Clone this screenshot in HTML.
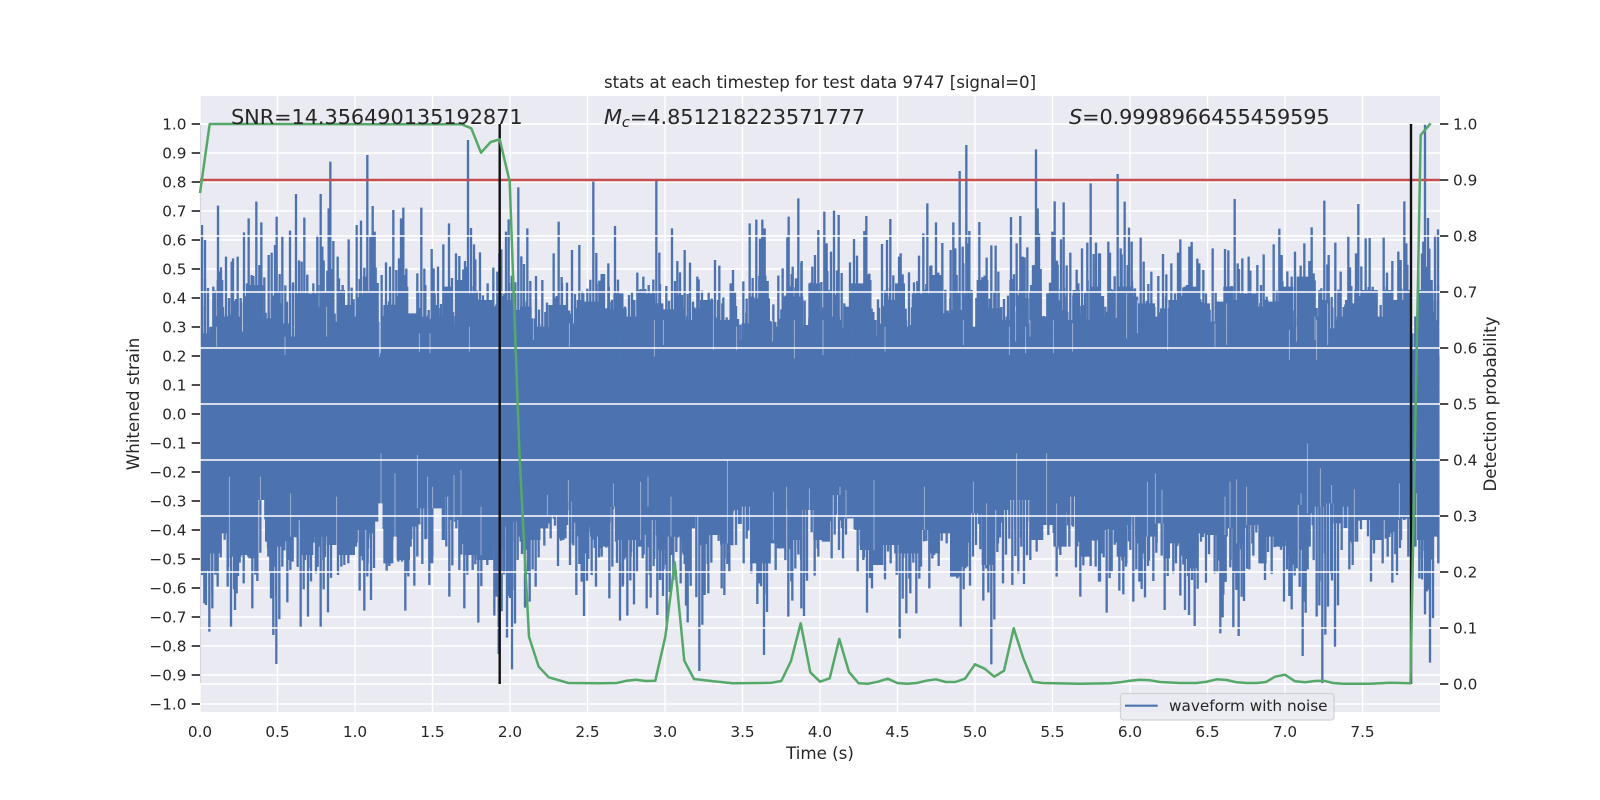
<!DOCTYPE html>
<html><head><meta charset="utf-8"><title>stats</title>
<style>html,body{margin:0;padding:0;background:#fff;width:1600px;height:800px;overflow:hidden}svg{display:block}text{font-family:"DejaVu Sans",sans-serif;fill:#262626}</style></head>
<body>
<svg xmlns="http://www.w3.org/2000/svg" width="1600" height="800" viewBox="0 0 1600 800">
<defs><clipPath id="ax"><rect x="201" y="96" width="1238.5" height="616"/></clipPath></defs>
<rect width="1600" height="800" fill="#fff"/>
<rect x="200" y="96" width="1240" height="616" fill="#EAEAF2"/>
<!-- left axis + x grid -->
<g stroke="#fff" stroke-width="1.39" fill="none">
<path d="M200 124H1440M200 153H1440M200 182H1440M200 211H1440M200 240H1440M200 269H1440M200 298H1440M200 327H1440M200 356H1440M200 385H1440M200 414H1440M200 443H1440M200 472H1440M200 501H1440M200 530H1440M200 559H1440M200 588H1440M200 617H1440M200 646H1440M200 675H1440M200 704H1440"/>
<path d="M200 96V712M277.5 96V712M355 96V712M432.5 96V712M510 96V712M587.5 96V712M665 96V712M742.5 96V712M820 96V712M897.5 96V712M975 96V712M1052.5 96V712M1130 96V712M1207.5 96V712M1285 96V712M1362.5 96V712"/>
</g>
<path d="M200.5 124V684" stroke="#d6d6de" stroke-width="1.2"/>
<!-- waveform -->
<g clip-path="url(#ax)">
<rect x="201" y="355" width="1238.5" height="90" fill="#4C72B0"/>
<g transform="translate(100,60) scale(.33333)">
<path fill="#4C72B0" d="M303 900V820H330V800H350V660H370V770H420V815H430V720H445V675H490V775H520V730H550V790H570V830H590V700H650V740H700V785H712V690H735V735H760V770H780V700H830V880H850V735H900V680H925V760H950V820H965V770H985V820H1000V770H1030V680H1055V795H1065V660H1100V700H1130V720H1180V740H1220V720H1240V750H1260V740H1295V775H1310V800H1345V735H1400V790H1430V720H1450V725H1500V900Z"/>
<path id="sa" fill="none" stroke="#4C72B0" stroke-width="7" d="M306 495V900M315 540V900M340 680V900M354 437V900M360 635V900M378 590V900M395 605V900M399 595V900M413 590V900M432 517V900M446 475V900M460 648V900M469 425V900M484 487V900M506 585V900M515 578V900M530 470V900M525 555V900M547 527V900M570 512V900M588 402V900M605 605V900M613 473V900M622 645V900M640 670V900M652 525V900M662 402V900M667 560V900M686 445V900M691 305V900M713 590V900M717 655V900M728 675V900M746 538V900M770 495V900M783 482V900M795 650V900M802 285V900M812 630V900M818 438V900M824 515V900M845 645V900M858 607V900M870 620V900M880 450V900M897 595V900M903 475V900M910 443V900M918 680V900M952 640V900M964 443V900M976 675V900M995 567V900M1001 625V900M1014 620V900M1030 553V900M1047 490V900M1052 680V900M1068 580V900M1078 588V900M1090 628V900M1098 620V900M1104 240V900M1114 678V900M1122 553V900M1126 598V900M1140 577V900M1163 670V900M1180 623V900M1192 635V900M1198 580V900M1204 568V900M1218 515V900M1226 478V900M1240 650V900M1255 382V900M1272 612V900M1282 505V900M1308 648V900M1327 660V900M1341 728V900M1361 580V900M1376 485V900M1386 670V900M1401 668V900M1416 570V900M1438 555V900M1450 700V900M1462 686V900M1480 365V900M1490 670V900M1498 662V900"/>
<use href="#sa" transform="translate(9,360) scale(1,.6)"/>
<use href="#sa" transform="translate(-9,495) scale(1,.45)"/>
<path fill="none" stroke="#EAEAF2" stroke-width="2.5" stroke-opacity=".6" d="M350 860V800M838 890V700M680 830V740M958 875V820M990 880V820M1108 875V800M1198 880V780M1300 840V775M1408 860V790M555 885V830"/>
</g>
<g transform="translate(600,120) scale(.33333)">
<path fill="#4C72B0" d="M0 720V630H25V500H30V570H40V520H65V565H80V590H110V510H130V520H165V550H190V568H225V525H250V600H280V565H300V540H340V600H410V660H425V610H445V530H460V535H510V605H525V650H545V530H610V615H625V490H660V575H690V590H720V625H730V560H750V490H810V600H830V650H855V540H885V490H915V620H935V520H990V465H1030V580H1060V570H1090V520H1115V620H1130V480H1165V565H1205V600H1228V480H1245V660H1255V610H1290V495H1325V590H1340V520H1360V570H1400V600H1420V510H1440V600H1470V500H1500V720Z"/>
<path id="sb" fill="none" stroke="#4C72B0" stroke-width="7" d="M5 462V720M12 462V720M25 430V720M32 568V720M45 318V720M67 520V720M75 560V720M87 525V720M96 515V720M103 540V720M112 458V720M122 507V720M130 470V720M136 507V720M146 495V720M157 520V720M169 183V720M180 492V720M186 560V720M199 498V720M216 325V720M225 568V720M232 423V720M240 457V720M254 390V720M270 428V720M283 562V720M292 470V720M296 478V720M306 512V720M316 540V720M326 515V720M335 535V720M345 420V720M358 437V720M370 532V720M380 592V720M392 490V720M399 450V720M405 515V720M430 484V720M449 310V720M458 530V720M469 299V720M480 356V720M487 299V720M494 325V720M502 533V720M510 603V720M520 553V720M535 467V720M548 445V720M562 352V720M566 290V720M578 440V720M588 475V720M595 235V720M605 423V720M632 488V720M637 440V720M645 405V720M655 330V720M663 575V720M673 275V720M680 370V720M693 395V720M702 272V720M716 285V720M723 600V720M733 550V720M742 562V720M750 427V720M762 357V720M771 407V720M780 530V720M793 333V720M799 288V720M806 463V720M811 480V720M824 600V720M834 538V720M846 372V720M861 360V720M871 297V720M880 535V720M889 495V720M897 410V720M902 400V720M908 463V720M927 457V720M942 487V720M952 483V720M957 407V720M970 340V720M982 250V720M994 436V720M1008 307V720M1015 458V720M1027 369V720M1040 577V720M1052 390V720M1060 307V720M1066 385V720M1079 153V720M1092 525V720M1099 75V720M1106 370V720M1114 585V720M1138 306V720M1148 480V720M1154 467V720M1160 413V720M1174 376V720M1187 377V720M1195 455V720M1212 537V720M1220 590V720M1233 291V720M1240 477V720M1250 370V720M1261 288V720M1268 410V720M1274 412V720M1282 382V720M1296 495V720M1303 435V720M1308 88V720M1313 265V720M1322 525V720M1331 588V720M1342 520V720M1350 488V720M1357 335V720M1364 244V720M1371 422V720M1383 358V720M1391 247V720M1399 530V720M1411 398V720M1421 510V720M1430 449V720M1435 490V720M1446 385V720M1453 555V720M1462 368V720M1472 190V720M1488 368V720M1497 400V720"/>
<use href="#sb" transform="translate(9,288) scale(1,.6)"/>
<use href="#sb" transform="translate(-9,396) scale(1,.45)"/>
<path fill="none" stroke="#EAEAF2" stroke-width="2.5" stroke-opacity=".6" d="M163 710V600M190 675V600M340 690V600M410 690V620M518 665V600M583 715V600M669 705V600M855 695V620M1090 675V600M1228 705V620M1247 665V560M1277 700V620M1360 700V600M1418 695V610M1290 650V600"/>
</g>
<g transform="translate(1100,60) scale(.33333)">
<path fill="#4C72B0" d="M0 900V770H25V690H40V780H50V680H100V710H115V730H165V770H180V745H205V720H250V680H290V775H305V730H330V785H345V725H370V680H400V720H415V700H470V740H490V720H505V725H545V680H580V800H590V650H640V770H655V720H690V805H710V770H735V720H755V730H785V690H830V770H850V690H880V720H900V755H930V820H950V690H965V620H985V690H1000V780H1017V900Z"/>
<path id="sc" fill="none" stroke="#4C72B0" stroke-width="7" d="M0 580V900M25 545V900M30 578V900M40 690V900M53 342V900M65 583V900M74 425V900M87 503V900M95 545V900M105 685V900M115 820V900M122 533V900M131 605V900M145 672V900M154 635V900M175 648V900M189 582V900M199 643V900M214 610V900M225 700V900M234 578V900M241 538V900M261 675V900M268 560V900M275 546V900M292 596V900M298 610V900M310 630V900M318 700V900M338 565V900M352 725V900M375 567V900M385 571V900M395 678V900M404 417V900M417 627V900M427 595V900M446 590V900M451 632V900M472 615V900M483 675V900M491 583V900M505 725V900M521 553V900M538 506V900M545 585V900M562 634V900M575 650V900M585 575V900M602 617V900M613 550V900M628 603V900M635 502V900M641 640V900M658 690V900M673 422V900M686 585V900M706 548V900M722 635V900M745 530V900M750 622V900M768 580V900M775 432V900M797 535V900M809 534V900M830 690V900M851 533V900M861 638V900M877 603V900M895 575V900M902 600V900M913 424V900M919 550V900M955 610V900M970 545V900M975 190V900M988 566V900M995 660V900M1005 525V900M1014 508V900"/>
<use href="#sc" transform="translate(9,360) scale(1,.6)"/>
<use href="#sc" transform="translate(-9,495) scale(1,.45)"/>
<path fill="none" stroke="#EAEAF2" stroke-width="2.5" stroke-opacity=".6" d="M80 835V700M112 820V720M203 870V730M345 860V790M380 855V730M590 845V800M645 840V770M683 855V730M568 900V810M650 900V780M940 870V820"/>
</g>
<g transform="translate(100,440) scale(.33333)">
<path fill="#4C72B0" d="M303 0V360H330V340H365V280H380V350H425V345H445V355H475V180H495V305H505V320H545V290H585V240H600V345H640V290H680V315H715V345H765V270H800V280H820V245H835V190H850V370H880V290H890V360H930V260H950V205H985V370H1000V205H1025V300H1035V170H1045V240H1075V225H1090V345H1130V360H1180V255H1200V245H1250V290H1265V235H1280V300H1315V265H1345V225H1375V295H1400V185H1420V240H1440V260H1470V290H1500V0Z"/>
<path id="sd" fill="none" stroke="#4C72B0" stroke-width="7" d="M306 405V0M313 490V0M318 495V0M328 575V0M337 505V0M345 335V0M353 440V0M383 440V0M393 560V0M405 510V0M410 460V0M431 430V0M445 350V0M457 505V0M472 423V0M505 350V0M513 475V0M520 585V0M529 672V0M538 325V0M547 380V0M562 487V0M568 360V0M578 365V0M602 560V0M612 345V0M624 530V0M632 385V0M648 400V0M662 560V0M670 360V0M684 517V0M694 315V0M714 405V0M724 380V0M733 375V0M745 370V0M752 320V0M768 320V0M779 452V0M793 512V0M803 370V0M813 480V0M860 392V0M868 378V0M886 285V0M895 365V0M906 365V0M916 512V0M923 400V0M943 437V0M967 372V0M988 435V0M1048 470V0M1065 245V0M1078 390V0M1093 505V0M1102 390V0M1118 390V0M1135 548V0M1145 360V0M1162 375V0M1175 350V0M1183 527V0M1190 470V0M1196 642V0M1205 325V0M1213 395V0M1221 593V0M1227 380V0M1236 688V0M1244 450V0M1253 290V0M1262 305V0M1275 503V0M1289 485V0M1307 440V0M1318 300V0M1333 317V0M1345 250V0M1352 295V0M1374 378V0M1390 300V0M1410 375V0M1418 310V0M1429 465V0M1445 425V0M1452 528V0M1465 357V0M1475 405V0M1488 440V0M1498 325V0"/>
<use href="#sd" transform="translate(9,0) scale(1,.8)"/>
<use href="#sd" transform="translate(-9,0) scale(1,.68)"/>
<path fill="none" stroke="#EAEAF2" stroke-width="2.5" stroke-opacity=".6" d="M388 110V350M481 110V180M572 160V290M710 170V315M843 40V190M885 100V290M952 45V205M1083 90V225M1062 105V240M983 110V205M998 140V205M1143 200V345M1405 120V185M1342 165V225"/>
</g>
<g transform="translate(600,440) scale(.33333)">
<path fill="#4C72B0" d="M0 0V320H30V200H50V300H110V320H130V200H150V240H175V330H195V290H240V300H265V265H285V230H310V285H360V310H385V315H400V210H425V200H450V370H510V310H530V325H555V205H575V300H600V210H640V300H665V305H690V165H720V235H765V270H785V330H810V375H850V315H895V340H960V270H985V340H1020V280H1050V410H1080V380H1105V220H1145V375H1185V210H1230V180H1290V300H1330V255H1360V320H1400V170H1425V240H1440V350H1470V300H1500V0Z"/>
<path id="se" fill="none" stroke="#4C72B0" stroke-width="7" d="M5 350V0M20 310V0M28 475V0M48 305V0M60 542V0M68 440V0M82 527V0M92 350V0M102 493V0M116 320V0M128 355V0M140 505V0M152 473V0M172 525V0M180 420V0M189 468V0M200 570V0M213 345V0M220 420V0M242 430V0M250 300V0M258 497V0M263 547V0M298 693V0M314 465V0M325 460V0M340 255V0M365 445V0M373 465V0M388 395V0M408 315V0M431 370V0M454 400V0M472 492V0M477 430V0M492 645V0M500 463V0M527 390V0M538 325V0M565 530V0M577 482V0M590 295V0M604 505V0M612 528V0M644 407V0M655 350V0M680 305V0M695 355V0M717 330V0M729 355V0M773 395V0M783 330V0M790 360V0M801 518V0M816 445V0M834 375V0M855 418V0M872 370V0M886 340V0M899 595V0M919 520V0M931 460V0M949 520V0M963 380V0M988 445V0M1002 345V0M1016 378V0M1040 310V0M1057 385V0M1072 415V0M1082 560V0M1096 385V0M1110 437V0M1128 315V0M1150 482V0M1162 375V0M1174 673V0M1183 420V0M1194 310V0M1209 430V0M1237 435V0M1255 400V0M1272 432V0M1291 360V0M1310 335V0M1320 290V0M1345 285V0M1370 410V0M1381 345V0M1395 320V0M1408 320V0M1428 382V0M1441 470V0M1455 350V0M1472 378V0M1487 380V0M1497 425V0"/>
<use href="#se" transform="translate(9,0) scale(1,.8)"/>
<use href="#se" transform="translate(-9,0) scale(1,.68)"/>
<path fill="none" stroke="#EAEAF2" stroke-width="2.5" stroke-opacity=".6" d="M40 130V200M122 125V300M144 110V200M382 60V310M1120 125V220M1250 40V180M1340 40V255M822 120V330M560 140V205M720 140V165M738 150V235M520 155V300M213 170V290M973 140V270M1160 190V375M1370 190V320M628 145V210"/>
</g>
<g transform="translate(1100,440) scale(.33333)">
<path fill="#4C72B0" d="M0 0V270H20V215H30V270H50V350H75V255H95V225H110V310H130V290H170V250H190V355H210V310H240V315H270V385H295V280H320V285H350V265H400V310H435V255H475V370H500V290H520V320H555V300H590V195H615V220H640V200H675V190H700V250H725V200H750V305H775V240H810V300H850V240H900V235H930V320H950V300H990V290H1017V0Z"/>
<path id="sf" fill="none" stroke="#4C72B0" stroke-width="7" d="M0 425V0M7 270V0M20 518V0M35 393V0M45 270V0M58 452V0M70 463V0M78 380V0M100 485V0M118 425V0M125 447V0M135 472V0M147 362V0M160 423V0M170 308V0M180 250V0M194 510V0M201 355V0M220 400V0M228 370V0M241 467V0M255 510V0M267 525V0M277 375V0M284 558V0M303 305V0M318 428V0M334 285V0M344 400V0M361 580V0M368 532V0M380 290V0M392 360V0M400 562V0M408 310V0M416 588V0M432 483V0M448 388V0M460 347V0M468 255V0M485 370V0M495 420V0M515 402V0M523 290V0M540 320V0M552 485V0M568 468V0M575 508V0M590 385V0M608 648V0M614 485V0M629 320V0M650 530V0M667 730V0M684 500V0M705 620V0M725 330V0M748 388V0M758 375V0M770 303V0M783 268V0M813 425V0M826 298V0M848 370V0M863 350V0M877 428V0M891 405V0M903 300V0M925 350V0M958 415V0M966 418V0M975 523V0M985 448V0M990 668V0M998 300V0M1015 370V0"/>
<use href="#sf" transform="translate(9,0) scale(1,.8)"/>
<use href="#sf" transform="translate(-9,0) scale(1,.68)"/>
<path fill="none" stroke="#EAEAF2" stroke-width="2.5" stroke-opacity=".6" d="M622 10V220M661 85V200M166 100V250M142 125V290M186 150V250M390 125V265M410 118V310M440 140V255M898 130V235M763 148V305M695 135V190M375 170V285M603 160V195M950 160V300"/>
</g>
</g>
<!-- right axis grid -->
<path stroke="#fff" stroke-width="1.39" fill="none" d="M200 124H1440M200 180H1440M200 236H1440M200 292H1440M200 348H1440M200 404H1440M200 460H1440M200 516H1440M200 572H1440M200 628H1440M200 684H1440"/>
<!-- lines -->
<path d="M200 180H1440" stroke="#C44E52" stroke-width="2.4"/>
<path d="M499.7 124V684M1411 124V684" stroke="#111" stroke-width="2.4" fill="none"/>
<path fill="none" stroke="#55A868" stroke-width="2.5" stroke-linejoin="round" d="M200 193L209.7 124L461.7 124.3L471.3 128.3L481 152.7L490.7 142L499.7 139.3L509.7 181.7L519.5 455L529 636.7L538.7 666.7L548.7 677.3L568.3 683L600 683.3L616.7 683L626.7 680.7L635.7 679.7L645.7 681L655.3 680.7L665.3 636.7L674.7 562.3L684.3 660.7L694 679L713.3 681.3L732.7 683.3L761.7 683L771.7 682.7L781.3 681L791 661L800.7 623.3L810.3 672.3L820 681.7L829.7 678.3L839.3 639L849 672L858.7 683.3L868.3 683.7L878 681.7L887.7 678.7L897.3 683L907 683.7L916.7 683L926.3 680.7L936 679.3L945.7 682L955.3 682L965 678.7L975 664.3L984.7 668.7L994.3 676.7L1004 670.7L1013.7 628.3L1023.3 658.3L1033 681.7L1042.7 683L1080 683.7L1110 683.3L1120 682.3L1130 680.7L1140 679.7L1150 680.3L1160 682L1180 683L1196.7 683L1206.7 681.7L1216.7 679.3L1226.7 680L1236.7 682.3L1246.7 683L1256.7 683L1266 682L1275 676.7L1285 674.7L1295 681.3L1305 682.3L1315 681L1323.3 680.7L1333.3 683L1343.3 683.7L1370 683.7L1390 682.7L1410.5 683.3L1420.7 135L1430.7 123.3"/>
<!-- ticks -->
<path stroke="#333" stroke-width="1.74" fill="none" d="M191.7 124H200M191.7 153H200M191.7 182H200M191.7 211H200M191.7 240H200M191.7 269H200M191.7 298H200M191.7 327H200M191.7 356H200M191.7 385H200M191.7 414H200M191.7 443H200M191.7 472H200M191.7 501H200M191.7 530H200M191.7 559H200M191.7 588H200M191.7 617H200M191.7 646H200M191.7 675H200M191.7 704H200M1440 124H1448.3M1440 180H1448.3M1440 236H1448.3M1440 292H1448.3M1440 348H1448.3M1440 404H1448.3M1440 460H1448.3M1440 516H1448.3M1440 572H1448.3M1440 628H1448.3M1440 684H1448.3"/>
<!-- annotations -->
<text x="231" y="124" font-size="20.83" letter-spacing="-.05">SNR=14.356490135192871</text>
<text x="604" y="124" font-size="20.83" letter-spacing="-.05"><tspan font-style="italic">M</tspan><tspan font-style="italic" font-size="14.6" dy="3">c</tspan><tspan dy="-3">=4.851218223571777</tspan></text>
<text x="1069" y="124" font-size="20.83" letter-spacing="-.1"><tspan font-style="italic">S</tspan>=0.9998966455459595</text>
<!-- title and labels -->
<text x="820" y="88" font-size="16.67" text-anchor="middle" letter-spacing="-.06">stats at each timestep for test data 9747 [signal=0]</text>
<text x="820" y="759" font-size="16.67" text-anchor="middle">Time (s)</text>
<text transform="translate(139,404) rotate(-90)" font-size="16.67" text-anchor="middle">Whitened strain</text>
<text transform="translate(1496,404) rotate(-90)" font-size="16.67" text-anchor="middle">Detection probability</text>
<!-- left tick labels -->
<g font-size="15.28" text-anchor="end">
<text x="186.5" y="129.5">1.0</text><text x="186.5" y="158.5">0.9</text><text x="186.5" y="187.5">0.8</text><text x="186.5" y="216.5">0.7</text><text x="186.5" y="245.5">0.6</text><text x="186.5" y="274.5">0.5</text><text x="186.5" y="303.5">0.4</text><text x="186.5" y="332.5">0.3</text><text x="186.5" y="361.5">0.2</text><text x="186.5" y="390.5">0.1</text><text x="186.5" y="419.5">0.0</text><text x="186.5" y="448.5">−0.1</text><text x="186.5" y="477.5">−0.2</text><text x="186.5" y="506.5">−0.3</text><text x="186.5" y="535.5">−0.4</text><text x="186.5" y="564.5">−0.5</text><text x="186.5" y="593.5">−0.6</text><text x="186.5" y="622.5">−0.7</text><text x="186.5" y="651.5">−0.8</text><text x="186.5" y="680.5">−0.9</text><text x="186.5" y="709.5">−1.0</text>
</g>
<!-- right tick labels -->
<g font-size="15.28">
<text x="1453" y="129.5">1.0</text><text x="1453" y="185.5">0.9</text><text x="1453" y="241.5">0.8</text><text x="1453" y="297.5">0.7</text><text x="1453" y="353.5">0.6</text><text x="1453" y="409.5">0.5</text><text x="1453" y="465.5">0.4</text><text x="1453" y="521.5">0.3</text><text x="1453" y="577.5">0.2</text><text x="1453" y="633.5">0.1</text><text x="1453" y="689.5">0.0</text>
</g>
<!-- x tick labels -->
<g font-size="15.28" text-anchor="middle">
<text x="200" y="737">0.0</text><text x="277.5" y="737">0.5</text><text x="355" y="737">1.0</text><text x="432.5" y="737">1.5</text><text x="510" y="737">2.0</text><text x="587.5" y="737">2.5</text><text x="665" y="737">3.0</text><text x="742.5" y="737">3.5</text><text x="820" y="737">4.0</text><text x="897.5" y="737">4.5</text><text x="975" y="737">5.0</text><text x="1052.5" y="737">5.5</text><text x="1130" y="737">6.0</text><text x="1207.5" y="737">6.5</text><text x="1285" y="737">7.0</text><text x="1362.5" y="737">7.5</text>
</g>
<!-- legend -->
<rect x="1120.5" y="693.5" width="213.5" height="26.5" rx="3" fill="#EAEAF2" fill-opacity=".85" stroke="#ccc" stroke-opacity=".85" stroke-width="1.2"/>
<path d="M1125 705.7H1157.7" stroke="#4C72B0" stroke-width="2.2"/>
<text x="1169" y="711" font-size="15.28">waveform with noise</text>
</svg>
</body></html>
